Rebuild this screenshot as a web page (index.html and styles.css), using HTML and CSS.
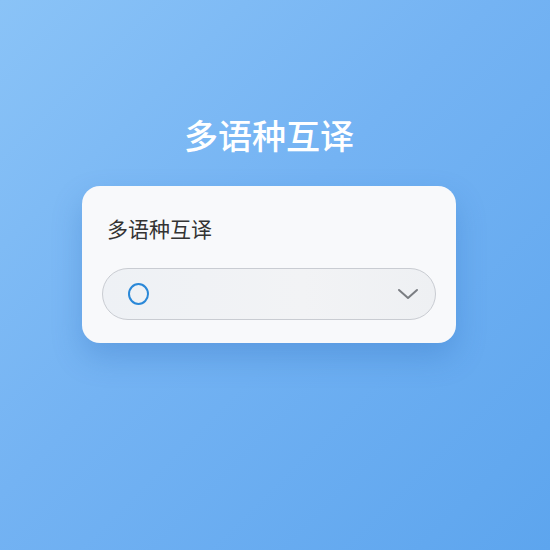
FILE: index.html
```html
<!DOCTYPE html>
<html lang="zh-CN">
<head>
  <meta charset="UTF-8">
  <meta name="viewport" content="width=device-width, initial-scale=1.0">
  <title>多语种互译</title>
  <link rel="stylesheet" href="styles.css">
</head>
<body>
  <main class="page">
    <h1 class="title">多语种互译</h1>
    <section class="card">
      <div class="card-label">多语种互译</div>
      <div class="select">
        <span class="select-dot"></span>
        <svg class="select-arrow" width="22" height="14" viewBox="0 0 22 14">
          <path d="M2 3 L11 11 L20 3" fill="none" stroke="#7a7d82" stroke-width="2" stroke-linecap="round" stroke-linejoin="round"/>
        </svg>
      </div>
    </section>
  </main>
</body>
</html>
```

FILE: styles.css
```css
* {
  box-sizing: border-box;
}

html, body {
  margin: 0;
  height: 100%;
}

body {
  background: linear-gradient(135deg, #8ac3f7 0%, #74b3f3 45%, #5da5ee 100%);
  font-family: "Noto Sans CJK SC", "Noto Sans", sans-serif;
}

.page {
  width: 374px;
  margin-left: 82px;
  padding-top: 113px;
}

.title {
  margin: 0;
  font-size: 34px;
  font-weight: 500;
  line-height: 44px;
  color: #fff;
  text-align: center;
}

.card {
  margin-top: 29px;
  background: #f8f9fb;
  border-radius: 18px;
  padding: 30px 20px 23px;
  box-shadow: 0 14px 30px rgba(40, 100, 180, 0.28);
}

.card-label {
  padding-left: 5px;
  font-size: 21px;
  line-height: 24px;
  color: #333;
}

.select {
  margin-top: 28px;
  height: 52px;
  border: 1px solid #c9ccd2;
  border-radius: 26px;
  background: linear-gradient(90deg, #eef1f5, #f2f3f5 60%, #eef0f3);
  display: flex;
  align-items: center;
  justify-content: space-between;
  padding: 0 16px 0 25px;
}

.select-dot {
  width: 21px;
  height: 22px;
  border: 2px solid #2a88d8;
  border-radius: 50%;
}
```
